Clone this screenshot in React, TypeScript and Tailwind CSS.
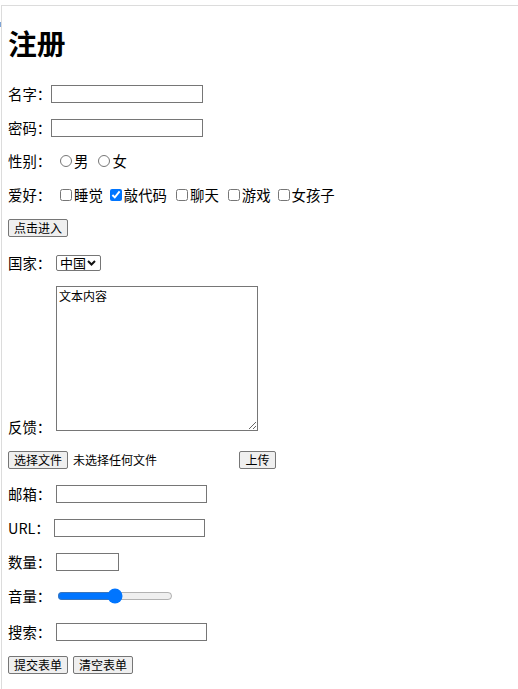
import React from "react";

const inputCls = "h-[18px] border border-[#767676] bg-white px-[2px] text-[12px] outline-none";
const btnCls =
  "h-[18px] border border-[#767676] bg-[#efefef] rounded-[2px] px-[5px] text-[12px] leading-[16px] text-black whitespace-nowrap";

const hobbies = [
  { name: "睡觉", checked: false, gap: "ml-0" },
  { name: "敲代码", checked: true, gap: "ml-[7px]" },
  { name: "聊天", checked: false, gap: "ml-[9px]" },
  { name: "游戏", checked: false, gap: "ml-[9px]" },
  { name: "女孩子", checked: false, gap: "ml-[7px]" },
];

const App = () => {
  return (
    <div
      className="relative min-h-[689px] bg-white text-black text-[14.4px]"
      style={{ fontFamily: '"Noto Sans CJK SC", "Noto Sans", sans-serif' }}
    >
      {/* frame edge */}
      <span className="absolute left-0 top-[17px] h-[5px] w-[1px] bg-[#7fa4d6]" />

      <div className="mt-[5px] ml-[1px] min-h-[684px] border-t border-l border-[#dcdcdc] pl-[6px]">
        <h1 className="mt-[21px] text-[28.8px] font-bold leading-[32px]">注册</h1>

        <form className="flex flex-col whitespace-nowrap">
          {/* 名字 */}
          <div className="mt-[25px] flex h-[19px] items-center">
            <span className="w-[43px] shrink-0">名字：</span>
            <input type="text" className={`${inputCls} w-[152px]`} />
          </div>

          {/* 密码 */}
          <div className="mt-[15px] flex h-[19px] items-center">
            <span className="w-[43px] shrink-0">密码：</span>
            <input type="password" className={`${inputCls} w-[152px]`} />
          </div>

          {/* 性别 */}
          <div className="mt-[14px] flex h-[19px] items-center">
            <span className="w-[52px] shrink-0">性别：</span>
            <input type="radio" name="sex" className="h-[12px] w-[12px]" />
            <span className="ml-[2px]">男</span>
            <input type="radio" name="sex" className="ml-[10px] h-[12px] w-[12px]" />
            <span className="ml-[2px]">女</span>
          </div>

          {/* 爱好 */}
          <div className="mt-[15px] flex h-[19px] items-center">
            <span className="w-[52px] shrink-0">爱好：</span>
            {hobbies.map((h) => (
              <label key={h.name} className={`flex items-center ${h.gap}`}>
                <input type="checkbox" defaultChecked={h.checked} className="h-[12px] w-[12px]" />
                <span className="ml-[2px]">{h.name}</span>
              </label>
            ))}
          </div>

          {/* 点击进入 */}
          <div className="mt-[14px] flex h-[19px] items-center">
            <button type="button" className={`${btnCls} w-[60px]`}>点击进入</button>
          </div>

          {/* 国家 */}
          <div className="mt-[16px] flex h-[19px] items-center">
            <span className="w-[48px] shrink-0">国家：</span>
            <div className="relative flex">
              <select className="h-[16px] w-[45px] appearance-none rounded-[2px] border border-[#767676] bg-white pl-[3px] text-[13px] leading-[14px]">
                <option>中国</option>
                <option>美国</option>
              </select>
              <svg
                className="pointer-events-none absolute right-[5px] top-[5px]"
                width="9"
                height="6"
                viewBox="0 0 9 6"
                fill="none"
              >
                <path d="M1 1l3.5 3.5L8 1" stroke="#111" strokeWidth="2" />
              </svg>
            </div>
          </div>

          {/* 反馈 */}
          <div className="mt-[14px] flex items-end">
            <span className="w-[48px] shrink-0 leading-[19px] mb-[-5px]">反馈：</span>
            <textarea
              defaultValue="文本内容"
              className="h-[145px] w-[202px] border border-[#767676] bg-white px-[2px] py-[1px] text-[12px] leading-[15px]"
            />
          </div>

          {/* 文件 */}
          <div className="mt-[19px] flex h-[19px] items-center">
            <label className="flex w-[227px] items-center">
              <span className={`${btnCls} w-[60px] text-center`}>选择文件</span>
              <input type="file" className="hidden" />
              <span className="ml-[5px] text-[12px]">未选择任何文件</span>
            </label>
            <button type="button" className={`${btnCls} ml-[4px] w-[37px]`}>上传</button>
          </div>

          {/* 邮箱 */}
          <div className="mt-[15px] flex h-[19px] items-center">
            <span className="w-[48px] shrink-0">邮箱：</span>
            <input type="email" className={`${inputCls} w-[151px]`} />
          </div>

          {/* URL */}
          <div className="mt-[15px] flex h-[19px] items-center">
            <span className="w-[46px] shrink-0">URL：</span>
            <input type="url" className={`${inputCls} w-[151px]`} />
          </div>

          {/* 数量 */}
          <div className="mt-[15px] flex h-[19px] items-center">
            <span className="w-[48px] shrink-0">数量：</span>
            <input type="number" className={`${inputCls} w-[63px]`} />
          </div>

          {/* 音量 */}
          <div className="mt-[15px] flex h-[19px] items-center">
            <span className="w-[49px] shrink-0">音量：</span>
            <input type="range" min={0} max={100} defaultValue={50} className="h-[16px] w-[116px]" />
          </div>

          {/* 搜索 */}
          <div className="mt-[17px] flex h-[19px] items-center">
            <span className="w-[48px] shrink-0">搜索：</span>
            <input type="search" className={`${inputCls} w-[151px]`} />
          </div>

          {/* 提交 / 清空 */}
          <div className="mt-[14px] flex h-[19px] items-center gap-[5px]">
            <button type="submit" className={`${btnCls} w-[60px]`}>提交表单</button>
            <button type="reset" className={`${btnCls} w-[60px]`}>清空表单</button>
          </div>
        </form>
      </div>
    </div>
  );
};

export default App;
